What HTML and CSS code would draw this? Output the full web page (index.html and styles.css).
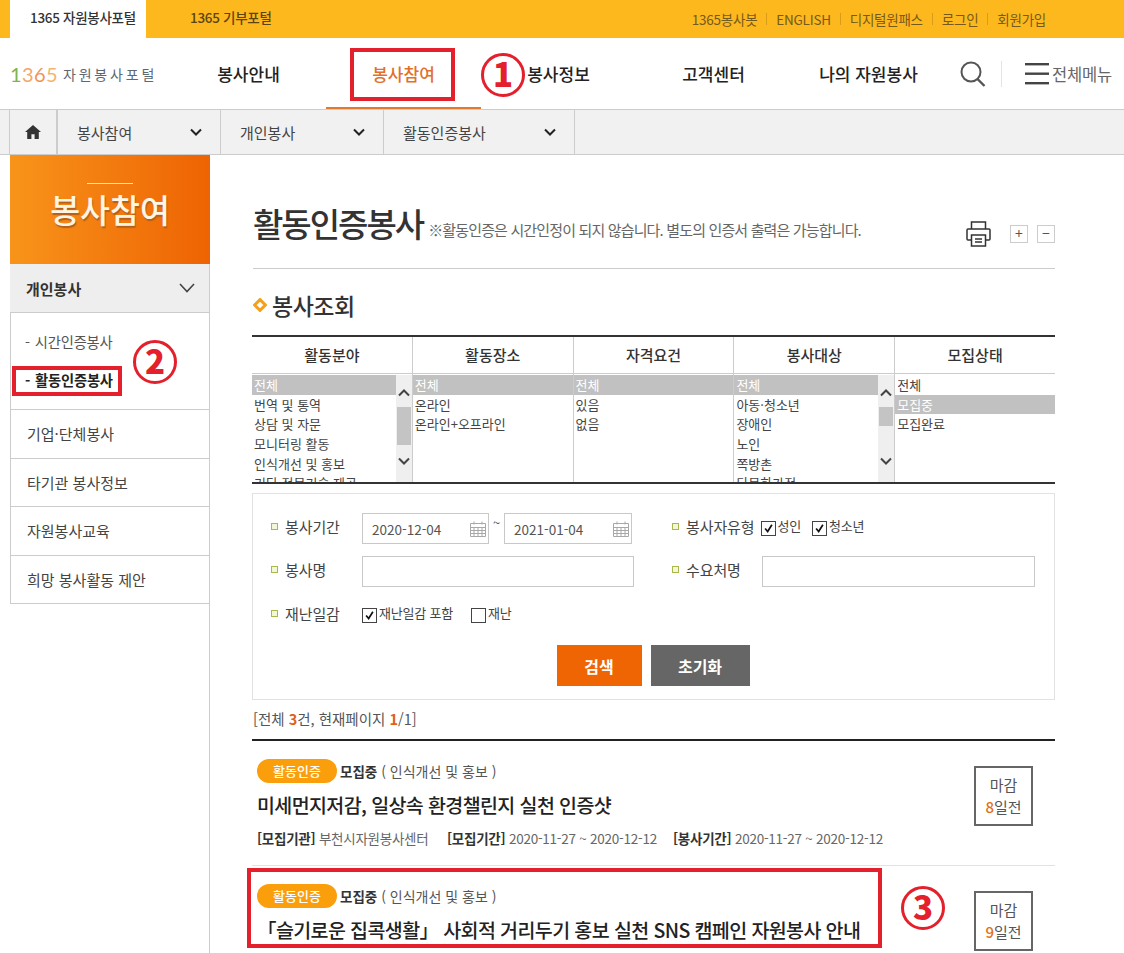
FILE: index.html
```html
<!DOCTYPE html>
<html lang="ko">
<head>
    <meta charset="UTF-8">
    <meta name="viewport" content="width=device-width, initial-scale=1.0">
    <title>활동인증봉사 - 1365 자원봉사포털</title>
    <link rel="stylesheet" href="styles.css">
</head>
<body>
<div class="page">
    <div class="top-bar">
        <div class="portal-tabs">
            <a class="portal-tab active">1365 자원봉사포털</a>
            <a class="portal-tab">1365 기부포털</a>
        </div>
        <ul class="util-links">
            <li>1365봉사봇</li>
            <li>ENGLISH</li>
            <li>디지털원패스</li>
            <li>로그인</li>
            <li>회원가입</li>
        </ul>
    </div>

    <header class="header">
        <div class="logo"><span class="logo-num"><i class="c1">1</i><i class="c2">3</i><i class="c3">6</i><i class="c4">5</i></span><span class="logo-name">자원봉사포털</span></div>
        <nav class="gnb">
            <a>봉사안내</a>
            <a class="active">봉사참여</a>
            <a>봉사정보</a>
            <a>고객센터</a>
            <a>나의 자원봉사</a>
        </nav>
        <svg class="search-icon" width="26" height="26" viewBox="0 0 26 26" fill="none" stroke="#555" stroke-width="2"><circle cx="11" cy="11" r="9.5"/><path d="M17.5 18l7 7" stroke-width="2.4"/></svg>
        <span class="header-sep"></span>
        <div class="all-menu">
            <svg width="24" height="22" viewBox="0 0 24 22" fill="#444"><rect y="0" width="24" height="2.4"/><rect y="9.5" width="24" height="2.4"/><rect y="19" width="24" height="2.4"/></svg>
            <span>전체메뉴</span>
        </div>
    </header>

    <div class="crumbs">
        <a class="crumb-home">
            <svg width="16" height="14" viewBox="0 0 16 14" fill="#333"><path d="M8 0L0 7h2.2v7h4.2V9.2h3.2V14h4.2V7H16z"/></svg>
        </a>
        <a class="crumb crumb-1">봉사참여 <svg class="chev" width="12" height="8" viewBox="0 0 12 8" fill="none" stroke="#222" stroke-width="2"><path d="M1 1.5l5 5 5-5"/></svg></a>
        <a class="crumb crumb-2">개인봉사 <svg class="chev" width="12" height="8" viewBox="0 0 12 8" fill="none" stroke="#222" stroke-width="2"><path d="M1 1.5l5 5 5-5"/></svg></a>
        <a class="crumb crumb-3">활동인증봉사 <svg class="chev" width="12" height="8" viewBox="0 0 12 8" fill="none" stroke="#222" stroke-width="2"><path d="M1 1.5l5 5 5-5"/></svg></a>
    </div>

    <div class="body-wrap">
        <aside class="side">
            <div class="side-title"><h2>봉사참여</h2></div>
            <div class="side-head">개인봉사 <svg width="16" height="10" viewBox="0 0 16 10" fill="none" stroke="#444" stroke-width="1.6"><path d="M1 1l7 7.5L15 1"/></svg></div>
            <ul class="side-sub">
                <li>시간인증봉사</li>
                <li class="on">활동인증봉사</li>
            </ul>
            <ul class="side-menu">
                <li>기업·단체봉사</li>
                <li>타기관 봉사정보</li>
                <li>자원봉사교육</li>
                <li>희망 봉사활동 제안</li>
            </ul>
        </aside>

        <main class="content">
            <div class="page-title">
                <h1>활동인증봉사</h1>
                <span class="page-note">※활동인증은 시간인정이 되지 않습니다. 별도의 인증서 출력은 가능합니다.</span>
                <div class="page-tools">
                    <svg class="print-icon" width="25" height="26" viewBox="0 0 25 26" fill="none" stroke="#333" stroke-width="1.5"><path d="M5.5 8V1h14v7"/><rect x="1" y="8" width="23" height="11" rx="1"/><rect x="5.5" y="14" width="14" height="11" fill="#fff"/><path d="M9 18h7M9 21h7" stroke-width="1.4"/></svg>
                    <span class="zoom-btn">+</span>
                    <span class="zoom-btn">−</span>
                </div>
            </div>

            <h3 class="section-title"><svg width="14" height="14" viewBox="0 0 14 14" fill="#fff" stroke="#f5a01a" stroke-width="3"><path d="M7 1.6L12.4 7 7 12.4 1.6 7z"/></svg>봉사조회</h3>

            <div class="filters">
                <div class="filter">
                    <div class="filter-head">활동분야</div>
                    <div class="filter-body">
                        <ul class="options">
                            <li class="sel">전체</li>
                            <li>번역 및 통역</li>
                            <li>상담 및 자문</li>
                            <li>모니터링 활동</li>
                            <li>인식개선 및 홍보</li>
                            <li>기타 전문기술 제공</li>
                        </ul>
                        <div class="scroll">
                            <svg class="arrow-up" width="12" height="8" viewBox="0 0 12 8" fill="none" stroke="#444" stroke-width="2"><path d="M1 6.5l5-5 5 5"/></svg>
                            <span class="thumb thumb-lg"></span>
                            <svg class="arrow-down" width="12" height="8" viewBox="0 0 12 8" fill="none" stroke="#444" stroke-width="2"><path d="M1 1.5l5 5 5-5"/></svg>
                        </div>
                    </div>
                </div>
                <div class="filter">
                    <div class="filter-head">활동장소</div>
                    <div class="filter-body">
                        <ul class="options">
                            <li class="sel">전체</li>
                            <li>온라인</li>
                            <li>온라인+오프라인</li>
                        </ul>
                    </div>
                </div>
                <div class="filter">
                    <div class="filter-head">자격요건</div>
                    <div class="filter-body">
                        <ul class="options">
                            <li class="sel">전체</li>
                            <li>있음</li>
                            <li>없음</li>
                        </ul>
                    </div>
                </div>
                <div class="filter">
                    <div class="filter-head">봉사대상</div>
                    <div class="filter-body">
                        <ul class="options">
                            <li class="sel">전체</li>
                            <li>아동·청소년</li>
                            <li>장애인</li>
                            <li>노인</li>
                            <li>쪽방촌</li>
                            <li>다문화가정</li>
                        </ul>
                        <div class="scroll">
                            <svg class="arrow-up" width="12" height="8" viewBox="0 0 12 8" fill="none" stroke="#444" stroke-width="2"><path d="M1 6.5l5-5 5 5"/></svg>
                            <span class="thumb thumb-sm"></span>
                            <svg class="arrow-down" width="12" height="8" viewBox="0 0 12 8" fill="none" stroke="#444" stroke-width="2"><path d="M1 1.5l5 5 5-5"/></svg>
                        </div>
                    </div>
                </div>
                <div class="filter">
                    <div class="filter-head">모집상태</div>
                    <div class="filter-body">
                        <ul class="options">
                            <li>전체</li>
                            <li class="sel">모집중</li>
                            <li>모집완료</li>
                        </ul>
                    </div>
                </div>
            </div>

            <form class="search-box">
                <div class="form-row row-1">
                    <div class="field field-left">
                        <label>봉사기간</label>
                        <span class="date-input">2020-12-04
                            <svg width="16" height="16" viewBox="0 0 16 16" fill="none" stroke="#a8a8a8"><path d="M.5 2.5h15v13H.5zM.5 6.5h15M.5 9.5h15M.5 12.5h15M4 6.5v9M8 6.5v9M12 6.5v9M4 .5v3M12 .5v3"/></svg>
                        </span>
                        <span class="tilde">~</span>
                        <span class="date-input">2021-01-04
                            <svg width="16" height="16" viewBox="0 0 16 16" fill="none" stroke="#a8a8a8"><path d="M.5 2.5h15v13H.5zM.5 6.5h15M.5 9.5h15M.5 12.5h15M4 6.5v9M8 6.5v9M12 6.5v9M4 .5v3M12 .5v3"/></svg>
                        </span>
                    </div>
                    <div class="field field-right">
                        <label class="label-auto">봉사자유형</label>
                        <span class="check on">성인</span>
                        <span class="check on">청소년</span>
                    </div>
                </div>
                <div class="form-row row-2">
                    <div class="field field-left">
                        <label>봉사명</label>
                        <span class="text-input"></span>
                    </div>
                    <div class="field field-right">
                        <label>수요처명</label>
                        <span class="text-input"></span>
                    </div>
                </div>
                <div class="form-row row-3">
                    <div class="field field-left">
                        <label>재난일감</label>
                        <span class="check on">재난일감 포함</span>
                        <span class="check">재난</span>
                    </div>
                </div>
                <div class="form-btns">
                    <button type="button" class="btn btn-search">검색</button>
                    <button type="button" class="btn btn-reset">초기화</button>
                </div>
            </form>

            <p class="result-count">[전체 <b>3</b>건, 현재페이지 <b>1</b>/1]</p>

            <div class="results">
                <div class="result">
                    <div class="result-main">
                        <div class="result-top"><span class="pill">활동인증</span><b>모집중</b> ( 인식개선 및 홍보 )</div>
                        <h4>미세먼지저감, 일상속 환경챌린지 실천 인증샷</h4>
                        <div class="result-meta">
                            <span class="meta-a"><b>[모집기관]</b> 부천시자원봉사센터</span>
                            <span class="meta-b"><b>[모집기간]</b> 2020-11-27 ~ 2020-12-12</span>
                            <span><b>[봉사기간]</b> 2020-11-27 ~ 2020-12-12</span>
                        </div>
                    </div>
                    <div class="deadline">마감<br><em>8</em>일전</div>
                </div>
                <div class="result">
                    <div class="result-main">
                        <div class="result-top"><span class="pill">활동인증</span><b>모집중</b> ( 인식개선 및 홍보 )</div>
                        <h4>「슬기로운 집콕생활」 사회적 거리두기 홍보 실천 SNS 캠페인 자원봉사 안내</h4>
                    </div>
                    <div class="deadline">마감<br><em>9</em>일전</div>
                </div>
            </div>
        </main>
    </div>

    <!-- 빨간 표시 -->
    <span class="mark mark-1"></span>
    <span class="mark mark-2"></span>
    <span class="mark mark-3"></span>
    <span class="num num-1">1</span>
    <span class="num num-2">2</span>
    <span class="num num-3">3</span>
</div>
</body>
</html>
```

FILE: styles.css
```css
* {
    box-sizing: border-box;
}

html, body {
    margin: 0;
    padding: 0;
    background: #fff;
}

body {
    font-family: "Noto Sans CJK KR", "Noto Sans", sans-serif;
    color: #333;
    font-size: 13px;
}

ul {
    list-style: none;
    margin: 0;
    padding: 0;
}

.page {
    position: relative;
    width: 1124px;
    height: 953px;
    overflow: hidden;
}

/* top bar */
.top-bar {
    display: flex;
    justify-content: space-between;
    height: 38px;
    padding: 0 78px 0 10px;
    background: #fdb81e;
}

.portal-tabs {
    display: flex;
}

.portal-tab {
    line-height: 34px;
    padding-left: 44px;
    font-size: 13.5px;
    font-weight: 500;
    letter-spacing: -0.3px;
    color: #5c4510;
}

.portal-tab.active {
    width: 136px;
    padding-left: 20px;
    background: #fff;
    color: #333;
}

.util-links {
    display: flex;
    align-items: center;
    font-size: 13.5px;
    letter-spacing: -0.25px;
    color: #755a1b;
}

.util-links li + li {
    margin-left: 9px;
    padding-left: 10px;
    background: linear-gradient(#d99d1a, #d99d1a) left center / 1px 12px no-repeat;
}

/* header */
.header {
    display: flex;
    align-items: center;
    height: 72px;
    border-bottom: 1px solid #ccc;
}

.logo {
    display: flex;
    align-items: center;
    width: 171px;
    padding-left: 10px;
    white-space: nowrap;
}

.logo-num {
    font-size: 20px;
    font-family: "Lato", sans-serif;
    letter-spacing: 0.4px;
}

.logo-num i {
    font-style: normal;
}

.logo-num .c1 { color: #7db451; }
.logo-num .c2 { color: #f3a86a; }
.logo-num .c3 { color: #ee9455; }
.logo-num .c4 { color: #f4b470; }

.logo-name {
    margin-left: 5px;
    font-size: 14px;
    letter-spacing: 2.8px;
    color: #5d6870;
}

.gnb {
    display: flex;
    align-self: stretch;
    width: 775px;
}

.gnb a {
    flex: 1;
    display: flex;
    align-items: center;
    justify-content: center;
    font-size: 17px;
    font-weight: 500;
    color: #222;
}

.gnb a.active {
    color: #e2702a;
    border-bottom: 2px solid #e2792f;
    padding-top: 2px;
}

.search-icon {
    margin-left: 14px;
}

.header-sep {
    width: 1px;
    height: 26px;
    margin-left: 15px;
    background: #e4e4e4;
}

.all-menu {
    display: flex;
    align-items: center;
    margin-left: 23px;
    font-size: 16.5px;
    letter-spacing: -0.2px;
    color: #666;
}

.all-menu span {
    margin-left: 3px;
}

/* breadcrumb */
.crumbs {
    display: flex;
    height: 45px;
    padding-left: 9px;
    background: #f1f1f1;
    border-bottom: 1px solid #ccc;
    font-size: 15px;
    color: #444;
}

.crumbs a {
    display: flex;
    align-items: center;
    justify-content: space-between;
    border-right: 1px solid #ccc;
}

.crumbs .crumb-home {
    justify-content: center;
    width: 49px;
    border-left: 1px solid #ccc;
    border-right-width: 2px;
}

.crumb {
    padding: 0 18px 0 19px;
}

.crumb-1 { width: 163px; }
.crumb-2 { width: 163px; }
.crumb-3 { width: 191px; }

/* layout */
.body-wrap {
    display: flex;
    align-items: stretch;
    height: 798px;
}

.side {
    width: 200px;
    margin-left: 10px;
    flex: none;
    border-right: 1px solid #ccc;
}

.side-title {
    height: 109px;
    padding-top: 28px;
    margin-right: -1px;
    background: linear-gradient(90deg, #f8941a, #ee6303);
    text-align: center;
}

.side-title h2 {
    width: 46px;
    margin: 0 auto;
    padding-top: 3px;
    border-top: 1px solid #fde3c0;
    display: flex;
    justify-content: center;
    white-space: nowrap;
    font-size: 32.5px;
    line-height: 44px;
    font-weight: 500;
    color: #fff5e4;
    text-shadow: 1px 2px 1px #b4601a;
}

.side-head {
    display: flex;
    align-items: center;
    justify-content: space-between;
    height: 49px;
    padding: 0 14px 0 16px;
    background: #eee;
    border-bottom: 1px solid #ccc;
    font-size: 15px;
    font-weight: 700;
    color: #333;
}

.side-sub {
    height: 97px;
    padding: 10px 0 0 14px;
    border-left: 1px solid #ccc;
    border-bottom: 1px solid #ccc;
    font-size: 14.3px;
    letter-spacing: -0.2px;
    color: #555;
}

.side-sub li {
    height: 38px;
    line-height: 38px;
}

.side-sub li::before {
    content: "-";
    margin-right: 5px;
}

.side-sub li.on {
    font-weight: 700;
    color: #222;
}

.side-menu {
    border-left: 1px solid #ccc;
}

.side-menu li {
    height: 48.5px;
    line-height: 47px;
    padding-left: 16px;
    border-bottom: 1px solid #ccc;
    font-size: 15px;
    color: #444;
}

/* content */
.content {
    width: 802px;
    margin-left: 43px;
}

.page-title {
    display: flex;
    align-items: flex-end;
    height: 114px;
    padding-bottom: 22px;
    border-bottom: 1px solid #ccc;
}

.page-title h1 {
    margin: 0;
    font-size: 33px;
    line-height: 46px;
    font-weight: 500;
    letter-spacing: -2px;
    color: #333;
}

.page-note {
    margin: 0 0 6px 5px;
    font-size: 15px;
    letter-spacing: -0.85px;
    color: #666;
}

.page-tools {
    display: flex;
    align-items: center;
    gap: 9px;
    margin: 0 0 -1px auto;
}

.print-icon {
    margin-right: 10px;
}

.zoom-btn {
    width: 18px;
    height: 18px;
    border: 1px solid #ccc;
    text-align: center;
    line-height: 15px;
    font-size: 14px;
    color: #555;
}

.section-title {
    display: flex;
    align-items: center;
    gap: 5px;
    height: 32px;
    margin: 20px 0 14px;
    font-size: 23px;
    font-weight: 500;
    letter-spacing: -0.5px;
    color: #333;
}

.filters {
    display: flex;
    margin-left: -1px;
    border-top: 2px solid #333;
    border-bottom: 2px solid #333;
    height: 149px;
}

.filter {
    flex: 1;
    min-width: 0;
    border-left: 1px solid #ccc;
}

.filter:first-child {
    border-left: 0;
}

.filter-head {
    height: 37px;
    line-height: 36px;
    text-align: center;
    border-bottom: 1px solid #ccc;
    font-size: 15px;
    font-weight: 500;
    color: #333;
}

.filter-body {
    display: flex;
    height: 108px;
    overflow: hidden;
    padding-top: 1px;
}

.options {
    flex: 1;
    min-width: 0;
    font-size: 13px;
    color: #444;
}

.options li {
    height: 19.7px;
    line-height: 19.7px;
    padding-left: 2px;
    white-space: nowrap;
}

.options li.sel {
    background: #c1c1c1;
    color: #fff;
}

.scroll {
    position: relative;
    width: 16px;
    flex: none;
    background: #efefef;
}

.scroll svg {
    position: absolute;
    left: 2px;
}

.arrow-up { top: 14px; }
.arrow-down { bottom: 17px; }

.thumb {
    position: absolute;
    left: 1px;
    top: 32px;
    width: 14px;
    background: #c4c4c4;
}

.thumb-lg { height: 38px; }
.thumb-sm { height: 19px; }

/* search form */
.search-box {
    height: 207px;
    margin: 9px 0 0 -1px;
    border: 1px solid #e2e2e2;
    padding-top: 19px;
    font-size: 13px;
}

.form-row {
    display: flex;
    padding-left: 18px;
}

.row-1 { height: 43px; }
.row-2 { height: 44px; }
.row-3 { height: 44px; }

.field {
    display: flex;
    align-items: flex-start;
}

.field-left {
    width: 401px;
}

.field label {
    display: flex;
    align-items: center;
    width: 91px;
    flex: none;
    height: 26px;
    font-size: 15px;
    letter-spacing: -0.1px;
    color: #444;
}

.field label::before {
    content: "";
    width: 5px;
    height: 5px;
    margin-right: 7px;
    border: 1px solid #a8b84a;
    background: #f4f6d8;
}

.field-right label {
    width: 90px;
}

.field label.label-auto {
    width: auto;
    margin-right: 6px;
}

.date-input {
    display: flex;
    align-items: center;
    justify-content: space-between;
    width: 127px;
    height: 31px;
    padding: 0 2px 0 9px;
    border: 1px solid #c8c8c8;
    font-size: 13.5px;
    color: #555;
}

.date-input + .tilde + .date-input {
    width: 128px;
}

.tilde {
    width: 15px;
    text-align: center;
    font-size: 13px;
    color: #555;
}

.text-input {
    display: block;
    width: 272px;
    height: 31px;
    border: 1px solid #c8c8c8;
}

.field-right .text-input {
    width: 273px;
}

.check {
    display: flex;
    align-items: flex-start;
    margin: 5px 11px 0 0;
    font-size: 13px;
    line-height: 16px;
    letter-spacing: -0.2px;
    color: #444;
}

.check::before {
    content: "";
    display: block;
    width: 13px;
    height: 13px;
    margin: 3px 2px 0 0;
    border: 1px solid #444;
    background: #fff;
}

.check.on::before {
    background: #fff url("data:image/svg+xml,%3Csvg xmlns='http://www.w3.org/2000/svg' viewBox='0 0 13 13'%3E%3Cpath d='M2.5 6.5l3 3.5 5-8' fill='none' stroke='%23111' stroke-width='2'/%3E%3C/svg%3E") center / 11px no-repeat;
}

.row-3 .check {
    margin-right: 18px;
}

.form-btns {
    display: flex;
    justify-content: center;
    gap: 9px;
    padding-right: 1px;
    height: 41px;
    margin-top: 1px;
}

.btn {
    border: 0;
    padding: 0;
    color: #fff;
    font-family: inherit;
    font-size: 16px;
    font-weight: 700;
}

.btn-search {
    width: 85px;
    background: #ef6403;
}

.btn-reset {
    width: 99px;
    background: #666;
}

.result-count {
    margin: 9px 0 0;
    height: 30px;
    line-height: 20px;
    font-size: 14.5px;
    color: #555;
}

.result-count b {
    color: #e0601a;
}

/* results */
.results {
    margin-left: -1px;
    border-top: 2px solid #222;
}

.result {
    display: flex;
    justify-content: space-between;
    height: 125px;
    padding: 18px 22px 0 5px;
    border-bottom: 1px solid #e2e2e2;
}

.result-top {
    display: flex;
    align-items: center;
    height: 24px;
    padding-bottom: 1px;
    font-size: 14px;
    white-space: pre;
    color: #555;
}

.result-top b {
    font-size: 13.5px;
    font-weight: 700;
    color: #333;
}

.pill {
    width: 80px;
    height: 24px;
    margin-right: 3px;
    border-radius: 12px;
    background: #fb9e0c;
    text-align: center;
    line-height: 23px;
    font-size: 13px;
    font-weight: 500;
    color: #fff;
}

.result h4 {
    margin: 7px 0 0;
    font-size: 19.5px;
    line-height: 30px;
    font-weight: 500;
    letter-spacing: -0.6px;
    color: #222;
    white-space: nowrap;
}

.result-meta {
    display: flex;
    margin-top: 8px;
    font-size: 13.5px;
    line-height: 20px;
    letter-spacing: -0.25px;
    color: #666;
}

.result-meta b {
    font-weight: 700;
    color: #333;
}

.meta-a { width: 190px; }
.meta-b { width: 226px; }

.deadline {
    width: 59px;
    height: 60px;
    margin-top: 7px;
    padding-top: 6px;
    border: 2px solid #666;
    text-align: center;
    font-size: 15px;
    line-height: 22px;
    color: #555;
}

.deadline em {
    font-style: normal;
    font-weight: 500;
    color: #e0701a;
}

/* annotation */
.mark {
    position: absolute;
    border: 4px solid #e3202c;
}

.mark-1 { left: 350px; top: 48px; width: 105px; height: 53px; }
.mark-2 { left: 12px; top: 366px; width: 110px; height: 30px; }
.mark-3 { left: 247px; top: 868px; width: 635px; height: 80px; }

.num {
    position: absolute;
    width: 44px;
    height: 44px;
    border: 3px solid #e3202c;
    border-radius: 50%;
    text-align: center;
    line-height: 35px;
    font-size: 33px;
    font-weight: 900;
    color: #e3202c;
}

.num-1 { left: 481px; top: 53px; }
.num-2 { left: 133px; top: 340px; }
.num-3 { left: 901px; top: 886px; }
```
